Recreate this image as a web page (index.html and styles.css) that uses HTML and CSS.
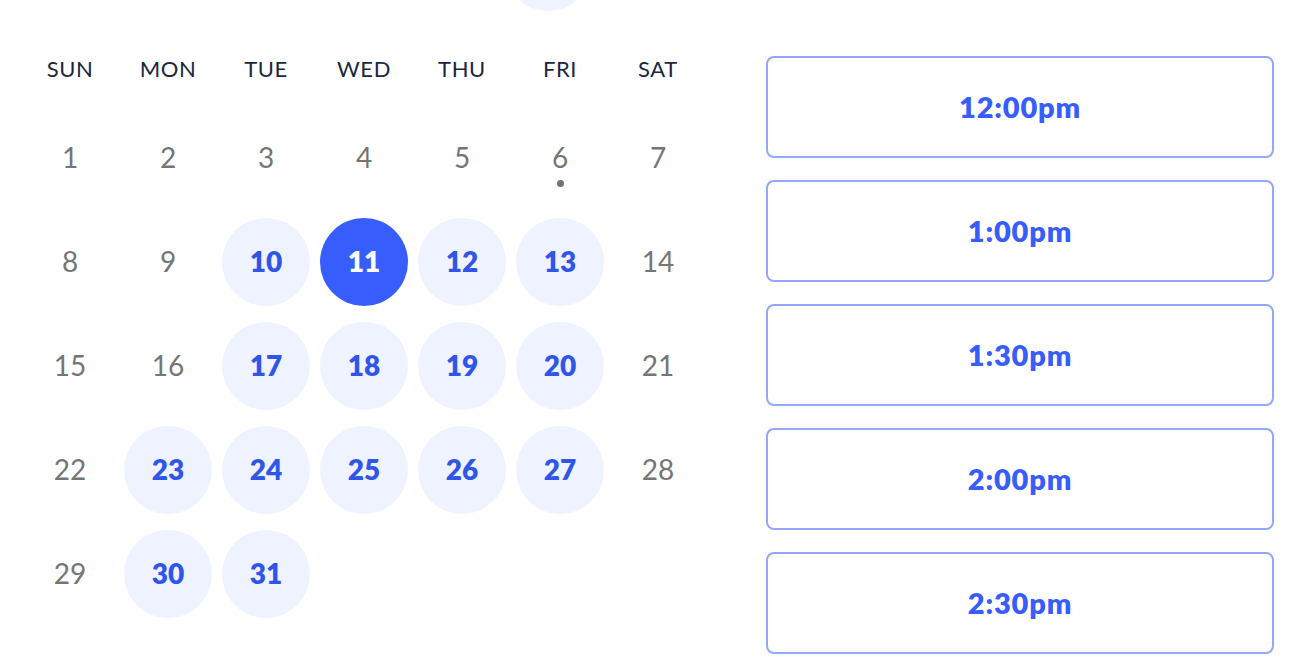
FILE: index.html
```html
<!DOCTYPE html>
<html lang="en">
<head>
<meta charset="utf-8">
<title>Select a Date &amp; Time</title>
<link rel="stylesheet" href="styles.css">
</head>
<body>
<div class="page">
  <div class="cal">
    <div class="nav"><span class="nav-btn"></span></div>
    <div class="week">
      <div>SUN</div><div>MON</div><div>TUE</div><div>WED</div><div>THU</div><div>FRI</div><div>SAT</div>
    </div>
    <div class="grid">
      <div class="cell"><span class="day">1</span></div>
      <div class="cell"><span class="day">2</span></div>
      <div class="cell"><span class="day">3</span></div>
      <div class="cell"><span class="day">4</span></div>
      <div class="cell"><span class="day">5</span></div>
      <div class="cell"><span class="day today">6</span></div>
      <div class="cell"><span class="day">7</span></div>

      <div class="cell"><span class="day">8</span></div>
      <div class="cell"><span class="day">9</span></div>
      <div class="cell"><span class="day avail">10</span></div>
      <div class="cell"><span class="day selected">11</span></div>
      <div class="cell"><span class="day avail">12</span></div>
      <div class="cell"><span class="day avail">13</span></div>
      <div class="cell"><span class="day">14</span></div>

      <div class="cell"><span class="day">15</span></div>
      <div class="cell"><span class="day">16</span></div>
      <div class="cell"><span class="day avail">17</span></div>
      <div class="cell"><span class="day avail">18</span></div>
      <div class="cell"><span class="day avail">19</span></div>
      <div class="cell"><span class="day avail">20</span></div>
      <div class="cell"><span class="day">21</span></div>

      <div class="cell"><span class="day">22</span></div>
      <div class="cell"><span class="day avail">23</span></div>
      <div class="cell"><span class="day avail">24</span></div>
      <div class="cell"><span class="day avail">25</span></div>
      <div class="cell"><span class="day avail">26</span></div>
      <div class="cell"><span class="day avail">27</span></div>
      <div class="cell"><span class="day">28</span></div>

      <div class="cell"><span class="day">29</span></div>
      <div class="cell"><span class="day avail">30</span></div>
      <div class="cell"><span class="day avail">31</span></div>
    </div>
  </div>
  <div class="times">
    <button class="slot">12:00pm</button>
    <button class="slot">1:00pm</button>
    <button class="slot">1:30pm</button>
    <button class="slot">2:00pm</button>
    <button class="slot">2:30pm</button>
  </div>
</div>
</body>
</html>
```

FILE: styles.css
```css
html, body {
  margin: 0;
  padding: 0;
  background: #ffffff;
  overflow: hidden;
}

body {
  font-family: Lato, "Liberation Sans", sans-serif;
  width: 1294px;
  height: 668px;
}

.page {
  display: flex;
  align-items: flex-start;
  gap: 59px;
  padding-left: 21px;
}

.cal {
  width: 686px;
  display: flex;
  flex-direction: column;
}

.nav {
  height: 88px;
  margin-top: -77px;
  padding-left: 483px;
  display: flex;
}

.nav-btn {
  width: 88px;
  height: 88px;
  border-radius: 50%;
  background: #eff2ff;
}

.week {
  display: grid;
  grid-template-columns: repeat(7, 98px);
  margin-top: 42px;
  height: 30px;
  align-items: center;
  text-align: center;
  font-size: 22px;
  color: #1a2740;
  letter-spacing: 0.6px;
}

.grid {
  display: grid;
  grid-template-columns: repeat(7, 98px);
  grid-auto-rows: 104px;
  margin-top: 23px;
}

.cell {
  display: flex;
  align-items: center;
  justify-content: center;
}

.day {
  position: relative;
  width: 88px;
  height: 88px;
  border-radius: 50%;
  display: flex;
  align-items: center;
  justify-content: center;
  font-size: 28px;
  color: #757575;
  padding-bottom: 2px;
  box-sizing: border-box;
}

.day.today::after {
  content: "";
  position: absolute;
  left: 41px;
  top: 66px;
  width: 7px;
  height: 7px;
  border-radius: 50%;
  background: #737373;
}

.day.avail {
  background: #eff2ff;
  color: #2f56e8;
  font-weight: 800;
}

.day.selected {
  background: #375dfd;
  color: #ffffff;
  font-weight: 800;
}

.times {
  width: 508px;
  padding-top: 56px;
  display: flex;
  flex-direction: column;
  gap: 22px;
}

.slot {
  height: 102px;
  box-sizing: border-box;
  border: 2px solid #93a7fe;
  border-radius: 8px;
  background: #ffffff;
  font-family: Lato, "Liberation Sans", sans-serif;
  font-size: 29px;
  font-weight: 800;
  letter-spacing: 0.8px;
  color: #375dfd;
  padding: 0 0 2px 0;
}
```
